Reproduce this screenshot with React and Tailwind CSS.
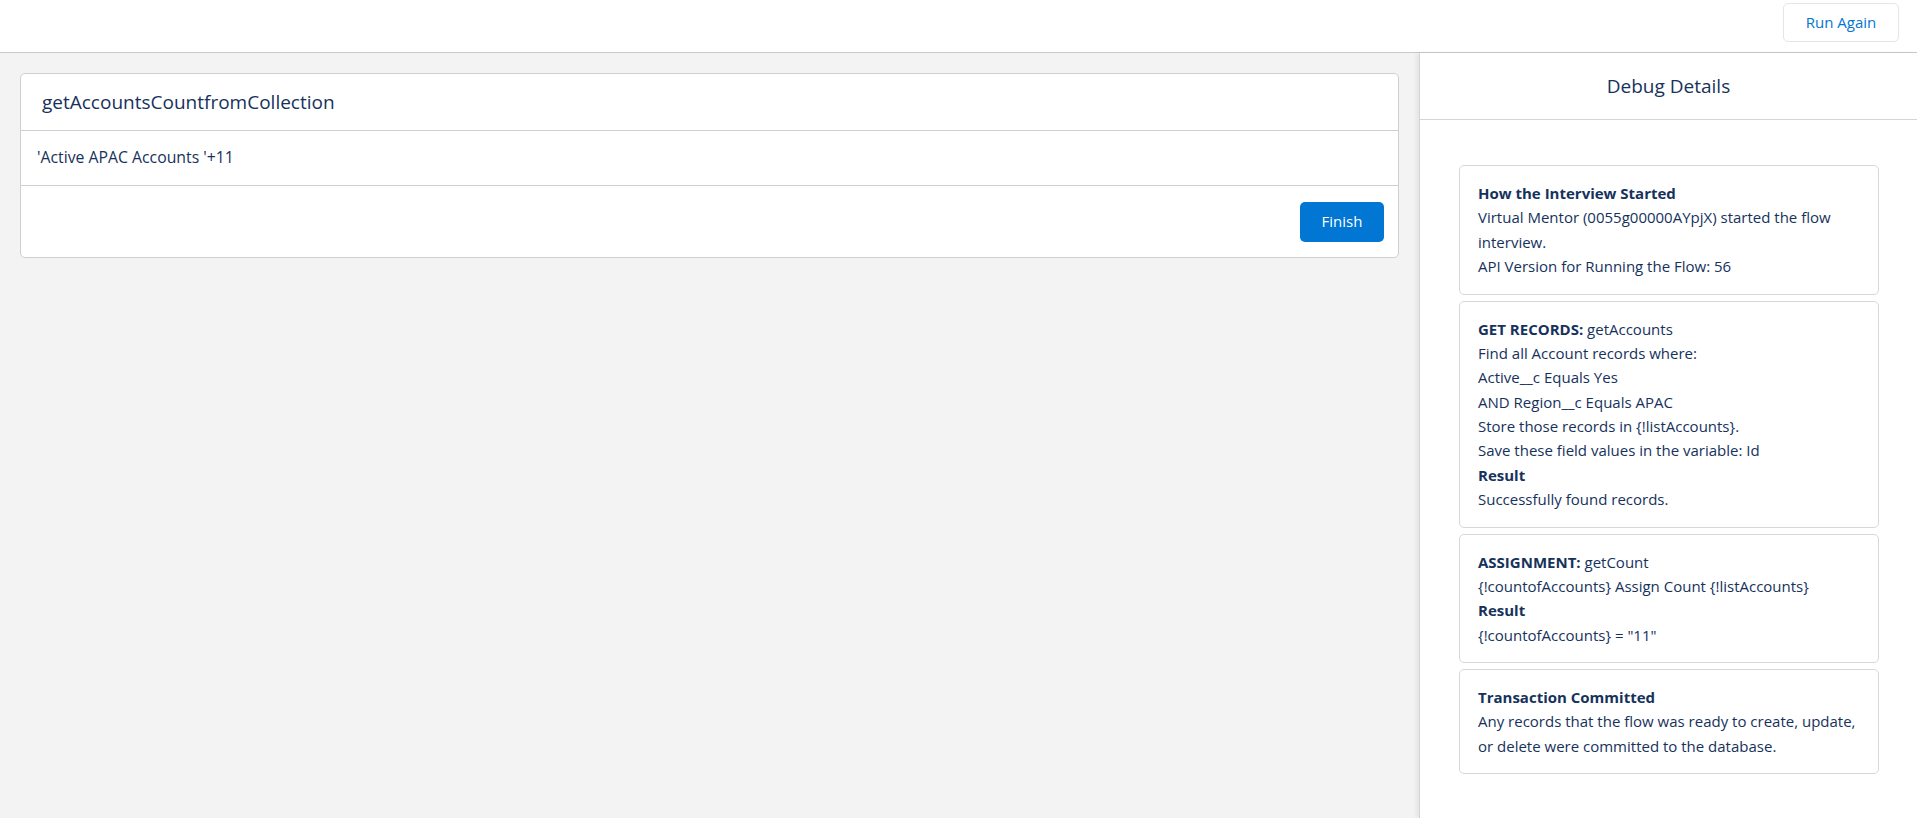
import React from "react";

const font = { fontFamily: '"Open Sans", "Noto Sans", sans-serif' };

function DebugCard({ children }) {
  return (
    <div className="rounded-[5px] border border-[#d8d8d8] bg-white px-[18px] py-[15px] text-[15px] leading-[24.375px] text-[#16325c]">
      {children}
    </div>
  );
}

export default function App() {
  return (
    <div style={font} className="flex h-[818px] w-[1917px] flex-col overflow-hidden bg-white text-[#16325c]">
      <div className="flex h-[53px] shrink-0 items-start justify-end border-b border-[#c9c9c9] bg-white pr-[18px] pt-[3px]">
        <button className="h-[39px] w-[116px] rounded-[5px] border border-[#e5e5e5] bg-white text-[15px] text-[#0176d3]">
          Run Again
        </button>
      </div>
      <div className="flex min-h-0 flex-1">
        <div className="flex-1 bg-[#f3f3f3] px-[20px] pt-[20px]">
          <div className="rounded-[5px] border border-[#cfcfcf] bg-white">
            <div className="flex h-[57px] items-center border-b border-[#cfcfcf] px-[21px]">
              <span className="text-[19px]">getAccountsCountfromCollection</span>
            </div>
            <div className="flex h-[55px] items-center border-b border-[#cfcfcf] px-[16px]">
              <span className="text-[15.8px]">'Active APAC Accounts '+11</span>
            </div>
            <div className="flex h-[71px] items-center justify-end px-[14px]">
              <button className="h-[40px] w-[84px] rounded-[5px] bg-[#0176d3] text-[15px] text-white">
                Finish
              </button>
            </div>
          </div>
        </div>
        <div className="flex w-[498px] shrink-0 flex-col border-l border-[#d4d4d4] bg-white shadow-[-3px_0_4px_rgba(0,0,0,0.06)]">
          <div className="flex h-[67px] shrink-0 items-center justify-center border-b border-[#d4d4d4]">
            <span className="text-[19px]">Debug Details</span>
          </div>
          <div className="flex flex-col gap-[6px] pl-[39px] pr-[38px] pt-[45px]">
            <DebugCard>
              <div className="font-bold">How the Interview Started</div>
              <div>Virtual Mentor (0055g00000AYpjX) started the flow interview.</div>
              <div>API Version for Running the Flow: 56</div>
            </DebugCard>
            <DebugCard>
              <div>
                <span className="font-bold">GET RECORDS:</span> getAccounts
              </div>
              <div>Find all Account records where:</div>
              <div>Active__c Equals Yes</div>
              <div>AND Region__c Equals APAC</div>
              <div>Store those records in {"{!listAccounts}"}.</div>
              <div>Save these field values in the variable: Id</div>
              <div className="font-bold">Result</div>
              <div>Successfully found records.</div>
            </DebugCard>
            <DebugCard>
              <div>
                <span className="font-bold">ASSIGNMENT:</span> getCount
              </div>
              <div>{"{!countofAccounts} Assign Count {!listAccounts}"}</div>
              <div className="font-bold">Result</div>
              <div>{'{!countofAccounts} = "11"'}</div>
            </DebugCard>
            <DebugCard>
              <div className="font-bold">Transaction Committed</div>
              <div>Any records that the flow was ready to create, update, or delete were committed to the database.</div>
            </DebugCard>
          </div>
        </div>
      </div>
    </div>
  );
}
